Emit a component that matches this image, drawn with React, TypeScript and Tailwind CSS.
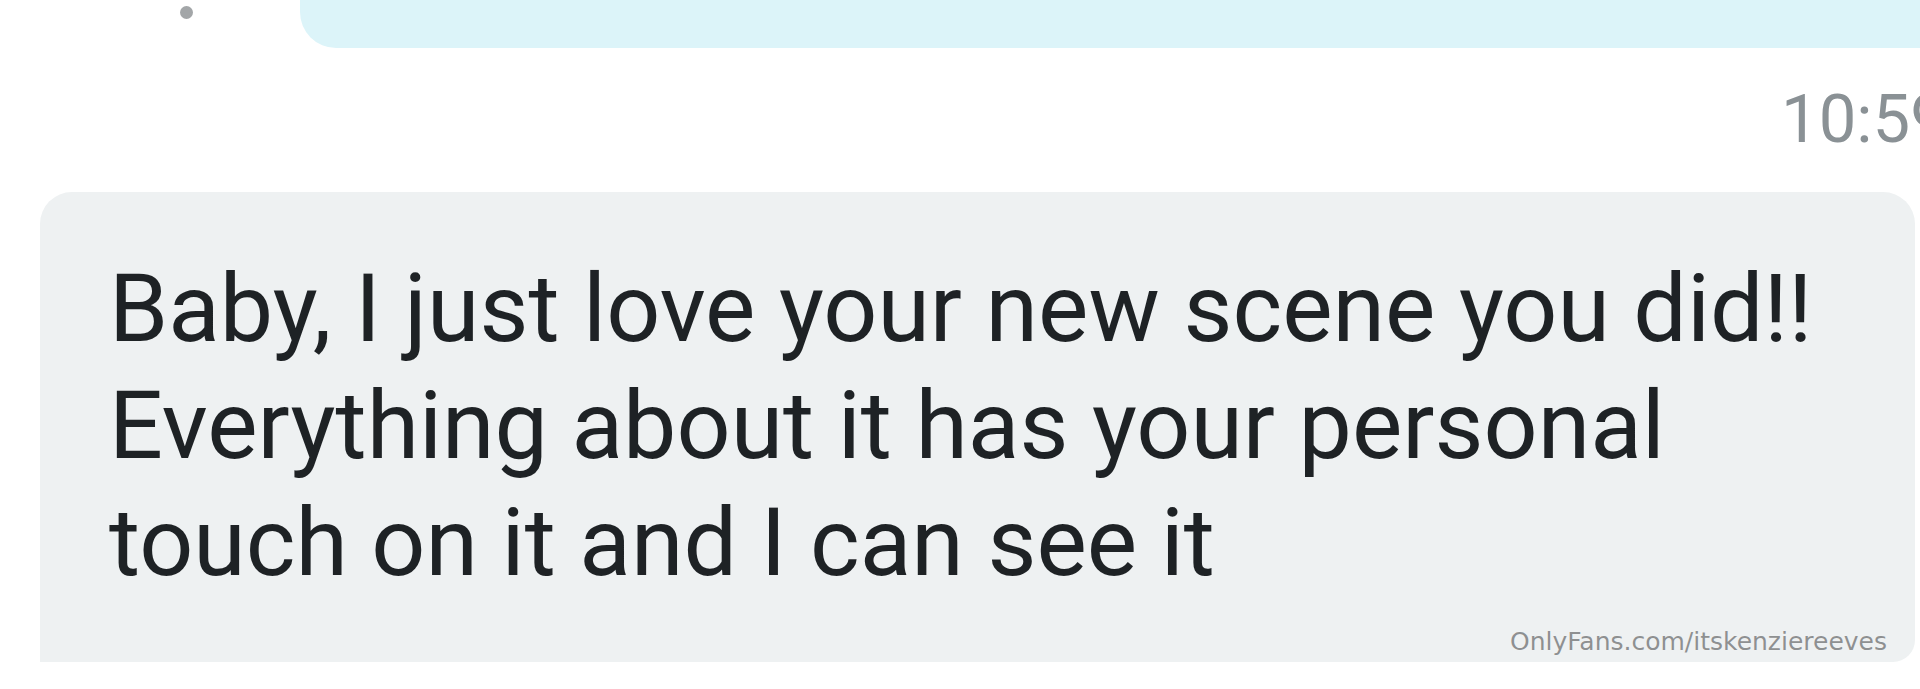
export default function App() {
  return (
    <div className="relative w-[1920px] h-[689px] overflow-hidden bg-white font-['Roboto',sans-serif]">
      <div className="flex items-start">
        <div className="ml-[180px] mt-[6px] w-[13px] h-[13px] rounded-full bg-[#a3a6a8]" />
        <div className="ml-[107px] flex-1 h-[48px] rounded-bl-[36px] bg-[#dcf4f9]" />
      </div>

      <div className="pl-[1781px] mt-[31px] whitespace-nowrap text-[67px] leading-[80px] text-[#8a9195]">
        10:59
      </div>

      <div className="ml-[40px] mr-[5px] mt-[33px] h-[470px] rounded-t-[32px] rounded-br-[22px] bg-[#eef1f2] pl-[69px] pt-[58px]">
        <p className="text-[95px] leading-[117px] text-[#1e2225]">
          Baby, I just love your new scene you did!!
          <br />
          Everything about it has your personal
          <br />
          touch on it and I can see it
        </p>
      </div>

      <div className="absolute right-[33px] top-[626px] font-['DejaVu_Sans',sans-serif] text-[25px] leading-[32px] text-[#8e9091] [text-shadow:0_0_1px_rgba(255,255,255,0.8)]">
        OnlyFans.com/itskenziereeves
      </div>
    </div>
  );
}
